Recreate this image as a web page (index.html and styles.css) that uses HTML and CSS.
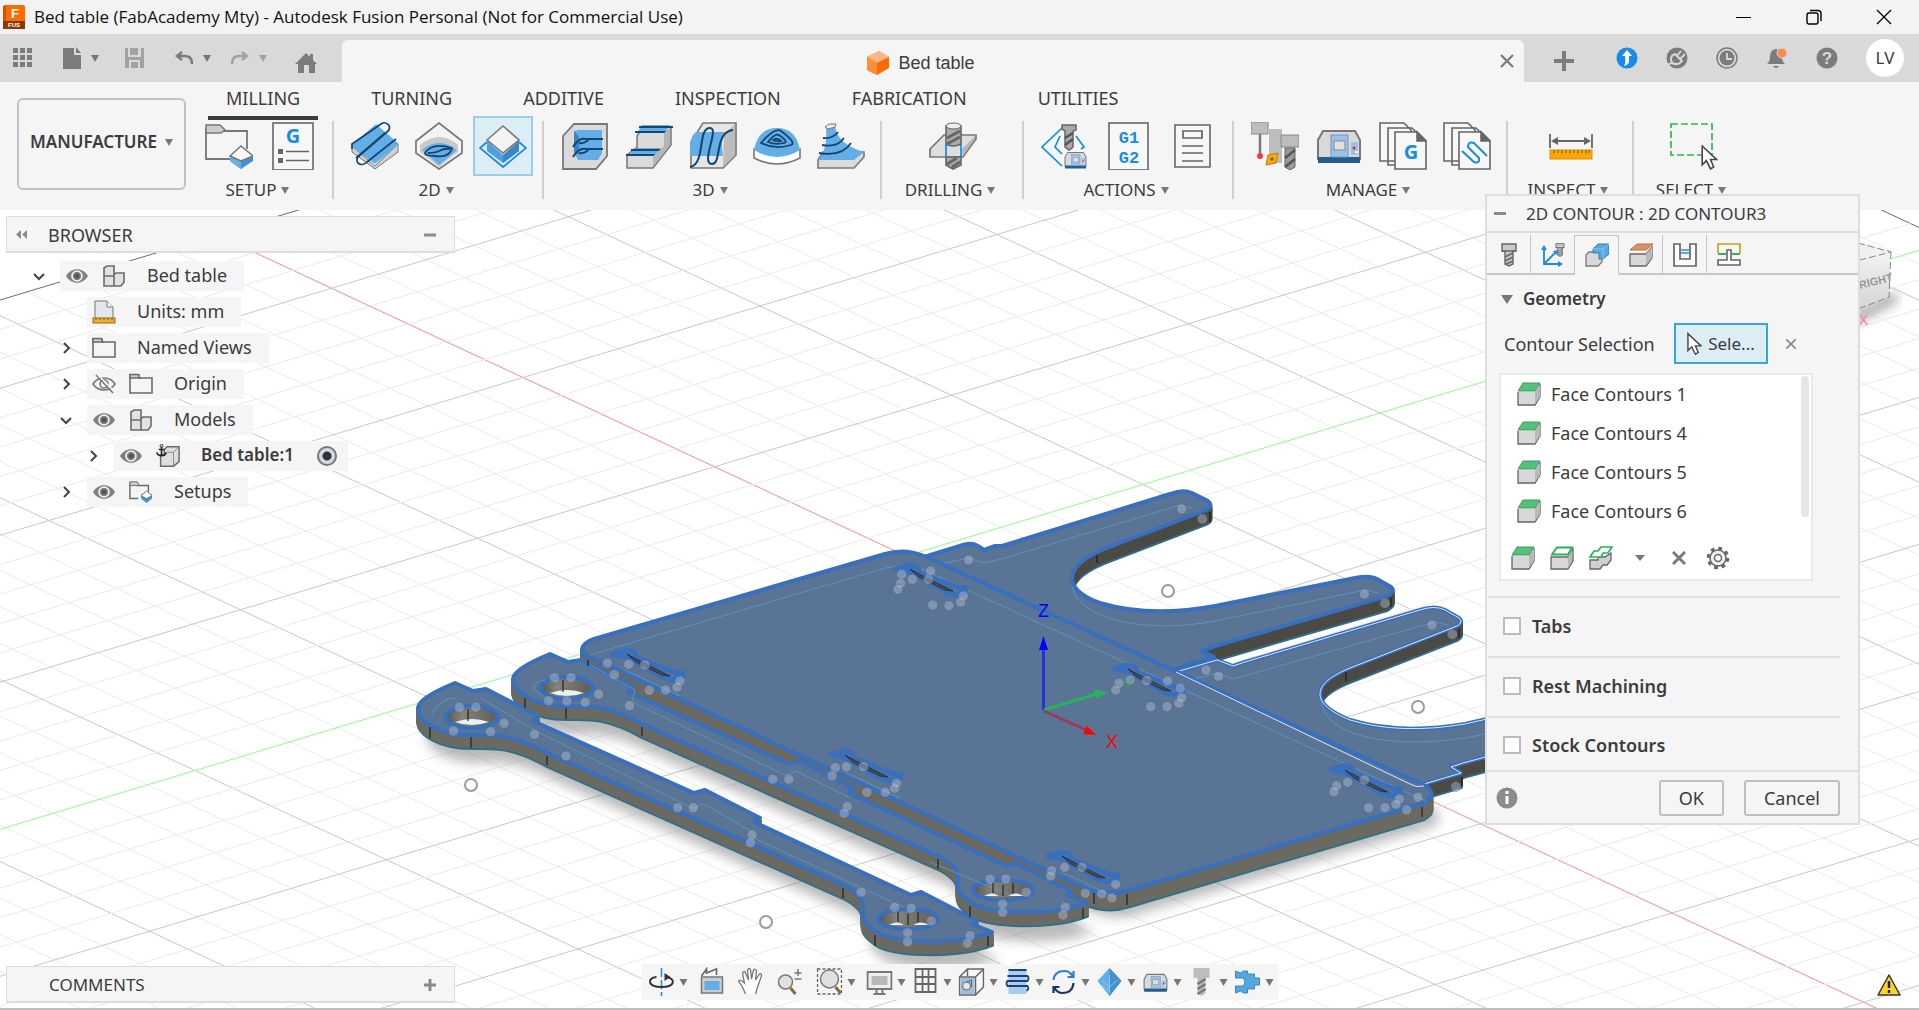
FILE: index.html
```html
<!DOCTYPE html>
<html lang="en">
<head>
<meta charset="utf-8">
<title>Bed table (FabAcademy Mty) - Autodesk Fusion Personal</title>
<link rel="stylesheet" href="styles.css">
</head>
<body>
<svg class="defs" aria-hidden="true">
  <defs>
    <linearGradient id="wall" x1="0" y1="0" x2="1" y2="0"><stop offset="0" stop-color="#55544e"/><stop offset=".3" stop-color="#85847a"/><stop offset="1" stop-color="#5d5c56"/></linearGradient>
    <linearGradient id="cubeg" x1="0" y1="0" x2="0" y2="1"><stop offset="0" stop-color="#f3f3f3"/><stop offset="1" stop-color="#d2d2d2"/></linearGradient>
    <filter id="soft" x="-10%" y="-10%" width="120%" height="130%"><feGaussianBlur stdDeviation="6"/></filter>
    <symbol id="i-eye" viewBox="0 0 24 24"><path d="M1 12C6 3 18 3 23 12C18 21 6 21 1 12z" fill="#808080"/><circle cx="12" cy="12" r="5" fill="#808080" stroke="#f5f5f5" stroke-width="1.6"/><circle cx="12" cy="12" r="2.5" fill="#555"/></symbol>
    <symbol id="i-eyeoff" viewBox="0 0 24 24"><path d="M1 12C6 4 18 4 23 12C18 20 6 20 1 12zM4 3L21 21" fill="none" stroke="#777" stroke-width="1.6"/><circle cx="12" cy="12" r="4" fill="none" stroke="#777" stroke-width="1.6"/><path d="M6 3L23 20" stroke="#f5f5f5" stroke-width="1.5"/></symbol>
    <symbol id="i-folder" viewBox="0 0 24 24"><path d="M1 20V3H10V6H23V21H1z" fill="none" stroke="#6b6b6b" stroke-width="1.6"/><path d="M1 2.500H9L11 6H1z" fill="#ccc" stroke="#6b6b6b" stroke-width="1.400"/></symbol>
    <symbol id="i-parts" viewBox="0 0 24 24"><g fill="#e2e2e2" stroke="#6b6b6b" stroke-width="1.600"><path d="M2 12V4L5 2H12V12zM2 12H12V22H2zM12 11L14 9H22V18L19 22H12z"/></g></symbol>
    <symbol id="i-units" viewBox="0 0 24 24"><path d="M3 19V1H15L21 7V19z" fill="#e4e6ee" stroke="#777"/><path d="M15 1V7H21" fill="#fff" stroke="#777"/><rect x="1" y="18" width="22" height="5" fill="#e9b12f" stroke="#9a6a1c"/><path d="M4 18v2M8 18v2M12 18v2M16 18v2M20 18v2" stroke="#8a5d16"/></symbol>
    <symbol id="i-setups" viewBox="0 0 26 26"><path d="M10 20H1V3H9V6H21V13" fill="none" stroke="#6b6b6b" stroke-width="1.600"/><path d="M1 2H9L11 6H1z" fill="#ccc" stroke="#6b6b6b"/><path d="M13 16L19 12L25 16V20L19 25L13 20z" fill="#3f93d3"/><path d="M13 17L19 12L25 17L19 20z" fill="#fff" stroke="#777"/></symbol>
    <symbol id="i-comp" viewBox="0 0 26 26"><path d="M5 12V24H19L25 19V3H12L9 6V12z" fill="#dedede" stroke="#6b6b6b" stroke-width="1.600"/><path d="M19 24V9L25 3M12 9H19" fill="none" stroke="#888"/><path d="M6 3V13M1 9C2 14 10 14 11 9M3 6H9" fill="none" stroke="#222" stroke-width="1.800"/><circle cx="6" cy="2" r="1.600" fill="none" stroke="#222"/></symbol>
    <symbol id="i-face" viewBox="0 0 24 24"><path d="M1 10H17L23 2V15L18 23H1z" fill="#d8d8d8"/><path d="M1 10V23H18L23 15V2" fill="none" stroke="#666" stroke-width="1.300"/><path d="M18 10L23 3V15L18 22z" fill="#b8b8b8"/><path d="M1 9L6 1H23L18 9z" fill="#55c07b" stroke="#3f9a5e"/></symbol>
    <symbol id="i-faceline" viewBox="0 0 24 24"><path d="M1 11H18L23 3V15L18 23H1z" fill="#d8d8d8" stroke="#666" stroke-width="1.300"/><path d="M18 11V22L22 15V4z" fill="#b8b8b8"/><path d="M2 8.500L7 1.500H22L18 8.500z" fill="#fff" stroke="#22b455" stroke-width="1.800"/></symbol>
    <symbol id="i-mill" viewBox="0 0 48 48"><path d="M3 18L8 9H40L45 18V37H3z" fill="#d9d9d9" stroke="#777" stroke-width="2"/><path d="M3 35H45V41H3z" fill="#235d8c"/><rect x="16" y="13" width="17" height="22" fill="#9cc1e8" stroke="#6c96c2"/><rect x="19" y="19" width="11" height="9" fill="#e0e0e0" stroke="#888"/><path d="M36 20H43V33H36z" fill="#9cc1e8"/><circle cx="39" cy="26" r="1.500" fill="#d23"/><path d="M40 29h3v2h-3z" fill="#fff"/></symbol>
    <symbol id="i-tool" viewBox="0 0 24 24"><path d="M5 1H19V8H16V21L12 23L8 21V8H5z" fill="#c9c9c9" stroke="#666" stroke-width="1.400"/><path d="M8 14L16 10M8 18L16 14M9 21L16 18M5 8H19" stroke="#666" stroke-width="1.600"/></symbol>
    <symbol id="i-cursor" viewBox="0 0 16 24"><path d="M1 1V19L5 15L9 23L12 21L9 14H15z" fill="#fff" stroke="#444" stroke-width="1.500"/></symbol>
  </defs>
</svg>

<header class="titlebar">
  <svg class="app-icon" viewBox="0 0 22 24"><rect width="22" height="24" rx="2" fill="#ff6b00"/><path d="M0 2L3 0V17H0z" fill="#d35400"/><path d="M0 16H22V24H0z" fill="#8c3a05"/><text x="12" y="13" class="appf">F</text><text x="11" y="22" class="appfus">FUS</text></svg>
  <h1>Bed table (FabAcademy Mty) - Autodesk Fusion Personal (Not for Commercial Use)</h1>
  <button class="win" aria-label="Minimize"><svg width="16" height="16"><path d="M0 8.500H15" stroke="#000" fill="none"/></svg></button>
  <button class="win" aria-label="Restore"><svg width="16" height="16" fill="none" stroke="#000" stroke-width="1.400"><rect x="1" y="4" width="11" height="11" rx="2"/><path d="M4 1.500H12Q15 1.500 15 4.500V12"/></svg></button>
  <button class="win" aria-label="Close"><svg width="16" height="16"><path d="M1 1L15 15M15 1L1 15" stroke="#000" stroke-width="1.300"/></svg></button>
</header>

<nav class="tabbar">
  <div class="quick">
    <button class="q q-grid" aria-label="Data panel"><svg width="20" height="20" fill="#7c7c7c"><path d="M0 0h5v5H0zM7 0h5v5H7zM14 0h5v5h-5zM0 7h5v5H0zM7 7h5v5H7zM14 7h5v5h-5zM0 14h5v5H0zM7 14h5v5H7zM14 14h5v5h-5z"/></svg></button>
    <button class="q q-file" aria-label="File"><svg width="18" height="22" fill="#7c7c7c"><path d="M0 1H11V8H18V22H0zM13 0L18 6H13z"/></svg><i class="tri"></i></button>
    <button class="q q-save" aria-label="Save"><svg width="20" height="20" fill="#a2a2a2"><path fill-rule="evenodd" d="M0 0H3V9H16V0H19V20H0zM4 12V20H15V12zM5 0H13V7H5zM6 14H13V20H6z"/></svg></button>
    <button class="q q-undo" aria-label="Undo"><svg width="18" height="14" fill="none" stroke="#7c7c7c" stroke-width="2.500"><path d="M7 1L2 5L7 9M2 5H10Q17 5 17 13"/></svg><i class="tri"></i></button>
    <button class="q q-redo dim" aria-label="Redo"><svg width="18" height="14" fill="none" stroke="#a2a2a2" stroke-width="2.500"><path d="M11 1L16 5L11 9M16 5H8Q1 5 1 13"/></svg><i class="tri"></i></button>
    <button class="q q-home" aria-label="Home"><svg width="22" height="22" fill="#7c7c7c"><path d="M0 12L11 1L15 5V2H18V8L22 12H20V21H14V13H9V21H3V12z"/></svg></button>
  </div>
  <div class="doc-tab">
    <span class="doc-name"><svg width="22" height="24"><path d="M0 6L12 0L22 6V17L10 24L0 19z" fill="#ff6a00"/><path d="M0 6L12 0L22 6L10 12z" fill="#ffb584"/><path d="M0 6L10 12V24L0 19z" fill="#ff8d3c"/></svg>Bed table</span>
    <button class="doc-close" aria-label="Close document"><svg width="14" height="14"><path d="M1 1L13 13M13 1L1 13" stroke="#7a7a7a" stroke-width="2.200"/></svg></button>
  </div>
  <div class="status">
    <button class="s-plus" aria-label="New document"><svg width="20" height="20"><path d="M10 0V20M0 10H20" stroke="#7c7c7c" stroke-width="4"/></svg></button>
    <button aria-label="Updates"><svg width="22" height="22"><circle cx="11" cy="11" r="10.500" fill="#178be6"/><path d="M11 3L16 9H13V15Q12 18 8 19Q10 16 9 9H6z" fill="#fff"/></svg></button>
    <button aria-label="Extensions"><svg width="22" height="22"><circle cx="11" cy="11" r="10.500" fill="#7c7c7c"/><path d="M2 18L7 15M6 16Q3 9 9 7L16 14Q12 19 6 16M11 9L15 4M14 12L19 7" fill="none" stroke="#d9d9d9" stroke-width="2"/></svg></button>
    <button aria-label="Job status"><svg width="22" height="22"><circle cx="11" cy="11" r="10" fill="none" stroke="#7c7c7c" stroke-width="1.500"/><circle cx="11" cy="11" r="7.500" fill="#7c7c7c"/><path d="M11 6V12H16" fill="none" stroke="#d9d9d9" stroke-width="1.800"/></svg></button>
    <button aria-label="Notifications"><svg width="22" height="22"><path d="M1 17Q4 15 4 9Q4 3 10 2Q16 3 16 9Q16 15 19 17zM7 19H13Q10 23 7 19" fill="#7c7c7c"/><circle cx="16" cy="6" r="5" fill="#ff8a50" stroke="#d9d9d9"/></svg></button>
    <button aria-label="Help"><svg width="22" height="22"><circle cx="11" cy="11" r="10.500" fill="#7c7c7c"/><text x="11" y="17" class="qmark">?</text></svg></button>
    <button class="avatar">LV</button>
  </div>
</nav>

<section class="ribbon">
  <button class="workspace">MANUFACTURE<i class="tri"></i></button>
  <div class="ribbon-main">
    <div class="ribbon-tabs">
      <button class="on">MILLING</button><button>TURNING</button><button>ADDITIVE</button><button>INSPECTION</button><button>FABRICATION</button><button>UTILITIES</button>
    </div>
    <div class="groups">
      <div class="group g-setup"><div class="icons">
        <button aria-label="Setup"><svg viewBox="0 0 48 48"><path d="M25 37H1V7H18V9H42V27" fill="none" stroke="#777" stroke-width="1.800"/><path d="M1 3H15L20 8L16 11H1z" fill="#ccc" stroke="#777" stroke-width="1.500"/><path d="M25 34L36 25L48 34V39L36 47L25 39z" fill="#3f93d3"/><path d="M25 34L36 24L48 34L36 39z" fill="#f8f8f8" stroke="#777" stroke-width="1.500"/><path d="M25 35L36 40V47L25 39z" fill="#69b2e8"/></svg></button>
        <button aria-label="NC Program"><svg viewBox="0 0 48 48"><rect x="4" y="1" width="40" height="47" fill="#f7f7f7" stroke="#666" stroke-width="1.600"/><text x="24" y="21" class="g">G</text><path d="M17 29.500H40M17 38.500H40" stroke="#666" stroke-width="1.600"/><path d="M9 27h5v5H9zM9 36h5v5H9z" fill="#666"/></svg></button>
      </div><button class="glabel">SETUP<i class="tri"></i></button></div>
      <div class="group g-2d"><div class="icons">
        <button aria-label="2D Adaptive"><svg viewBox="0 0 48 48"><path d="M1 24L24 44L47 22V30L24 47L1 30z" fill="#d0d0d0" stroke="#777"/><path d="M0 24L25 2L48 22L24 42z" fill="#63aee6"/><path d="M1 27V22L30 2C36-2 42 6 36 10L8 34C2 40 10 46 16 40L45 17M5 36L34 11" fill="none" stroke="#12456f" stroke-width="1.700"/></svg></button>
        <button aria-label="2D Pocket"><svg viewBox="0 0 48 48"><path d="M1 19L24 1L47 19V31L24 47L1 31z" fill="#f4f4f4" stroke="#777" stroke-width="1.700"/><path d="M5 23Q24 7 43 23V30L24 45L5 30z" fill="#c9c9c9"/><path d="M7 28Q24 14 42 28L24 43z" fill="#63aee6"/><path d="M10 31Q17 20 37 26Q35 36 20 34Q10 34 10 31zM13 31Q20 31 24 29Q30 26 35 27" fill="none" stroke="#12456f" stroke-width="1.800"/></svg></button>
        <button class="active" aria-label="2D Contour"><svg viewBox="0 0 48 48"><path d="M8 20L1 26L24 45L47 26L40 20" fill="none" stroke="#178be6" stroke-width="1.800"/><path d="M8 19V29L24 41L40 29V19L24 33z" fill="#4f9fdd"/><path d="M24 33L40 19V29L24 41z" fill="#3a86c4"/><path d="M8 18L24 4L40 18L24 31z" fill="#f4f4f4" stroke="#777" stroke-width="1.600"/></svg></button>
      </div><button class="glabel">2D<i class="tri"></i></button></div>
      <div class="group g-3d"><div class="icons">
        <button aria-label="3D Adaptive"><svg viewBox="0 0 48 48"><path d="M2 14L13 2H46V34L35 47H2z" fill="#dadada" stroke="#777" stroke-width="1.800"/><path d="M13 9L18 8H41V31L37 38H17L13 30z" fill="#63aee6"/><path d="M13 9L18 15V32L13 30z" fill="#3a86c4"/><path d="M12 25Q18 15 25 17H42M18 21Q24 22 28 17M12 35Q18 25 25 27H42M18 31Q24 32 28 27" fill="none" stroke="#12456f" stroke-width="2"/></svg></button>
        <button aria-label="3D Pocket"><svg viewBox="0 0 48 48"><path d="M2 33L12 25V14L18 5H46V23L28 46H2z" fill="#dadada" stroke="#777" stroke-width="1.500"/><path d="M17 3H45L40 11H12zM10 26H36L29 34H4z" fill="#63aee6"/><path d="M14 5H48M10 10H44M6 28H37M1 33H32" stroke="#12456f" stroke-width="1.800"/><path d="M39 11V24L28 34V45L45 23V6z" fill="#b5b5b5"/></svg></button>
        <button aria-label="Parallel"><svg viewBox="0 0 48 48"><path d="M2 20L14 1H47V33L34 46H2z" fill="#e6e6e6" stroke="#777" stroke-width="1.600"/><path d="M35 12L46 2V33L34 45z" fill="#bdbdbd"/><path d="M1 34Q0 12 8 10H36Q31 18 34 34z" fill="#63aee6"/><path d="M1 45C17 42 8 6 21 6C31 6 11 42 23 42C33 42 25 10 44 8" fill="none" stroke="#12456f" stroke-width="2"/></svg></button>
        <button aria-label="Contour"><svg viewBox="0 0 48 48"><path d="M1 27V36Q24 48 47 36V27z" fill="#fff" stroke="#777" stroke-width="1.600"/><path d="M1 28Q5 6 24 6T47 28Q24 42 1 28z" fill="#63aee6"/><path d="M8 21Q22 5 28 9Q44 21 38 23Q23 28 8 21zM15 20Q22 11 26 13Q36 20 31 21Q23 23 15 20zM20 18Q24 15 28 19Q24 20 20 18z" fill="none" stroke="#12456f" stroke-width="1.800"/></svg></button>
        <button aria-label="Ramp"><svg viewBox="0 0 48 48"><path d="M1 38L6 30H47V35L37 46H1z" fill="#dadada" stroke="#777" stroke-width="1.600"/><path d="M9 6L18 4Q20 22 47 30L37 38H1Q11 27 9 6z" fill="#63aee6"/><path d="M8 5L12 2H19L18 5L11 7z" fill="#eee" stroke="#777"/><path d="M6 16Q16 17 21 10M5 23Q20 26 27 16M2 31Q25 35 34 21" fill="none" stroke="#12456f" stroke-width="1.800"/></svg></button>
      </div><button class="glabel">3D<i class="tri"></i></button></div>
      <div class="group g-drill"><div class="icons">
        <button aria-label="Drill"><svg viewBox="0 0 48 48"><path d="M1 27L15 13H47V17L34 35H1z" fill="#dedede" stroke="#777" stroke-width="1.700"/><path d="M33 27L46 14V17L34 34z" fill="#b5b5b5"/><path d="M17 4V22Q24 26 32 22V4zM17 35V43L24 47L32 43V35z" fill="#ababab" stroke="#666" stroke-width="1.600"/><ellipse cx="24.500" cy="4" rx="7.500" ry="3" fill="#eee" stroke="#666"/><path d="M18 16L31 9M18 22L31 15M18 42L28 36M23 45L31 40" stroke="#666" stroke-width="3"/><path d="M17 22V35M32 22V35" stroke="#178be6" stroke-width="1.700"/></svg></button>
      </div><button class="glabel">DRILLING<i class="tri"></i></button></div>
      <div class="group g-actions"><div class="icons">
        <button aria-label="Simulate"><svg viewBox="0 0 48 48"><path d="M21 6L1 25L21 44M19 14L14 25L21 32M35 14L43 25L40 27" fill="none" stroke="#178be6" stroke-width="1.700"/><path d="M21 3H35V8L32 9V25L28 28L24 25V9L21 7z" fill="#aaa" stroke="#666" stroke-width="1.500"/><path d="M24 16L32 11M24 23L32 17" stroke="#555" stroke-width="2.500"/><use href="#i-mill" x="22" y="26" width="25" height="24"/></svg></button>
        <button aria-label="Post Process"><svg viewBox="0 0 48 48"><rect x="4" y="1" width="39" height="47" fill="#f7f7f7" stroke="#666" stroke-width="1.600"/><text x="24" y="21" class="g1">G1</text><text x="24" y="41" class="g1">G2</text></svg></button>
        <button aria-label="Setup Sheet"><svg viewBox="0 0 48 48"><path d="M6 3H41V45H6z" fill="#f7f7f7" stroke="#666" stroke-width="1.600"/><path d="M14 9H33V16H14zM13 24H34M13 31H34M13 39H34" fill="none" stroke="#666" stroke-width="1.700"/></svg></button>
      </div><button class="glabel">ACTIONS<i class="tri"></i></button></div>
      <div class="group g-manage"><div class="icons">
        <button aria-label="Tool Library"><svg viewBox="0 0 48 48"><path d="M0 0H17V12H0zM18 7H31V41H18zM30 13H48V25H30z" fill="#bdbdbd"/><path d="M0 0H17V12H0zM30 13H48V25H30z" fill="none" stroke="#888"/><path d="M9 12V31" stroke="#777" stroke-width="2.500"/><circle cx="9" cy="34" r="3" fill="#ff3434"/><path d="M17 33L27 31L25 41L15 43z" fill="#ffa800" stroke="#c27c00"/><circle cx="21" cy="37" r="1.800" fill="#666"/><path d="M34 26H44V45L39 48L34 45z" fill="#999" stroke="#666"/><path d="M34 36L44 28M34 45L44 37" stroke="#555" stroke-width="2.500"/></svg></button>
        <button aria-label="Machine Library"><svg viewBox="0 0 48 48"><use href="#i-mill" width="48" height="48"/></svg></button>
        <button aria-label="Post Library"><svg viewBox="0 0 48 48" fill="#f7f7f7" stroke="#666" stroke-width="1.600"><path d="M1 1H25L32 8V39H1zM9 6H33L40 13V43H9z"/><path d="M16 10H38L47 19V47H16z"/><path d="M38 10V19H47z" fill="#666"/><text x="32" y="37" class="g">G</text></svg></button>
        <button aria-label="Template Library"><svg viewBox="0 0 48 48" fill="#f7f7f7" stroke="#666" stroke-width="1.600"><path d="M1 1H25L32 8V39H1zM9 6H33L40 13V43H9z"/><path d="M16 10H38L47 19V47H16z"/><path d="M38 10V19H47z" fill="#666"/><path d="M19 29L31 40Q37 42 36 36L25 25Q25 19 31 21L44 34" fill="none" stroke="#178be6" stroke-width="2"/></svg></button>
      </div><button class="glabel">MANAGE<i class="tri"></i></button></div>
      <div class="group g-inspect"><div class="icons">
        <button aria-label="Measure"><svg viewBox="0 0 48 48"><path d="M3 12V26M45 12V26M6 19H42" stroke="#666" stroke-width="1.800"/><path d="M4 19L11 15V23zM44 19L37 15V23z" fill="#666"/><rect x="3" y="28" width="42" height="9" fill="#ffa800" stroke="#d99012"/><path d="M7 28v4M11 28v3M15 28v4M19 28v3M23 28v4M27 28v3M31 28v4M35 28v3M39 28v4M42 28v3" stroke="#7a5a14"/></svg></button>
      </div><button class="glabel">INSPECT<i class="tri"></i></button></div>
      <div class="group g-select"><div class="icons">
        <button aria-label="Select"><svg viewBox="0 0 48 48"><rect x="1" y="2" width="41" height="31" fill="none" stroke="#2fb457" stroke-width="1.700" stroke-dasharray="7 3"/><use href="#i-cursor" x="31" y="23" width="17" height="25"/></svg></button>
      </div><button class="glabel">SELECT<i class="tri"></i></button></div>
    </div>
  </div>
</section>

<main class="viewport">
  <svg class="scene" viewBox="0 210 1919 798" preserveAspectRatio="xMidYMid slice" aria-label="Model">
    <defs>
      <path id="board" d="M582 650Q582 643 594 639L885 554Q905 548 924 556L1426 786Q1438 795 1424 803L1130 890Q1105 898 1082 887L585 655Q582 653 582 650z"/>
      <path id="forkA" d="M924 557L963 545Q973 542 978 546L984 550L995 546L1002 546L1170 494Q1183 489 1192 493L1208 501Q1214 506 1206 510L1112 546C1060 565 1062 590 1100 603Q1150 618 1215 606L1355 578Q1370 575 1377 579L1391 587Q1396 591 1387 596L1215 646L1201 651L1214 657L1172 670z"/>
      <path id="forkB" d="M1176 672L1217 660L1233 666L1245 662L1420 610Q1435 605 1445 610L1459 618Q1464 622 1457 626L1350 668C1310 684 1310 704 1350 720Q1400 735 1465 724L1500 716V753L1463 763L1451 767L1461 773L1424 784Q1418 787 1410 784z"/>
      <path id="plank" d="M418 708Q418 698 455 683L473 691L486 689L538 716L533 721L694 793L705 790L760 818L754 822L911 895L921 892L977 921L972 924L992 932C960 945 900 943 880 934C850 916 870 910 859 896Q852 889 843 885L547 753C510 732 490 735 471 735C440 735 418 722 418 708z"/>
      <path id="slot" d="M613 654L627 650L634 652L637 658L676 673L683 673L682 677L673 680L663 677L628 657z"/>
    </defs>
    <g class="grid"></g>
    <g class="shadow" filter="url(#soft)"><use href="#board" x="8" y="24"/><use href="#plank" x="103" y="0"/><use href="#plank" x="8" y="28"/></g>
    <g class="solid dark"><use class="foot" href="#forkA" y="14"/><use href="#forkA" y="12"/><use href="#forkA" y="10"/><use href="#forkA" y="8"/><use href="#forkA" y="6"/><use href="#forkA" y="4"/><use href="#forkA" y="2"/></g>
    <use class="top" href="#forkA"/>
    <g class="solid dark"><use class="foot" href="#forkB" y="14"/><use href="#forkB" y="12"/><use href="#forkB" y="10"/><use href="#forkB" y="8"/><use href="#forkB" y="6"/><use href="#forkB" y="4"/><use href="#forkB" y="2"/></g>
    <use class="top" href="#forkB"/><use class="hot" href="#forkB"/>
    <g class="ghost"><path d="M940 564L968 558L984 563L1002 559L1180 505L1192 508M1072 586C1080 625 1160 632 1215 621L1365 590L1378 593M1190 680L1217 673L1233 679L1435 622L1448 625M1321 700C1325 740 1400 748 1465 738L1500 731"/></g>
    <g class="solid"><use class="foot" href="#board" y="16"/><use href="#board" y="14"/><use href="#board" y="12"/><use href="#board" y="10"/><use href="#board" y="8"/><use href="#board" y="6"/><use href="#board" y="4"/><use href="#board" y="2"/></g>
    <use class="top" href="#board"/><path class="hot" d="M1176 672L1410 784Q1416 788 1424 786"/>
    <g class="ghost"><path d="M590 655L885 568Q905 564 924 570L1426 801M625 670L680 696M845 772L900 798M1062 872L1116 898"/></g>
    <g class="slots"><use href="#slot"/><use href="#slot" x="218" y="101"/><use href="#slot" x="435" y="202"/><use href="#slot" x="283" y="-85"/><use href="#slot" x="501" y="15"/><use href="#slot" x="718" y="116"/></g>
    <g class="cuts"><path id="cut" d="M627 654L640 661L670 676L662 675L636 662z"/><use href="#cut" x="218" y="101"/><use href="#cut" x="435" y="202"/><use href="#cut" x="283" y="-85"/><use href="#cut" x="501" y="15"/><use href="#cut" x="718" y="116"/></g>
    <g>
      <g class="solid"><use class="foot" href="#plank" x="95" y="-16"/><use href="#plank" x="95" y="-18"/><use href="#plank" x="95" y="-20"/><use href="#plank" x="95" y="-22"/><use href="#plank" x="95" y="-24"/><use href="#plank" x="95" y="-26"/></g>
      <use class="top" href="#plank" x="95" y="-29"/>
      <g class="holes" transform="translate(95 -29)"><ellipse cx="472" cy="717" rx="26" ry="11"/><ellipse cx="908" cy="919" rx="30" ry="10"/><path d="M455 722Q472 716 489 722Q472 728 455 722zM889 925Q897 920 904 925zM913 925Q921 920 929 925z"/></g>
      <path class="ghost" d="M545 680Q520 685 550 700M590 665L635 690L632 702L785 775L796 771L850 798M930 862L1010 895"/>
    </g>
    <g>
      <g class="solid"><use class="foot" href="#plank" y="13"/><use href="#plank" y="11"/><use href="#plank" y="9"/><use href="#plank" y="7"/><use href="#plank" y="5"/><use href="#plank" y="3"/></g>
      <use class="top" href="#plank"/>
      <g class="holes"><ellipse cx="472" cy="717" rx="26" ry="11"/><ellipse cx="908" cy="919" rx="30" ry="10"/><path d="M455 722Q472 716 489 722Q472 728 455 722zM889 925Q897 920 904 925zM913 925Q921 920 929 925z"/></g>
      <path class="ghost" d="M432 714Q440 698 456 698M480 698L540 733L692 808L704 804L752 832L754 838L905 908"/>
    </g>
    <path class="ticks" d="M430 727V738M471 737V748M547 756V765M843 888V898M875 935V946M988 936V946M525 698V708M566 708V719M642 727V736M938 859V869M970 906V917M1083 908V918M1094 893V904M1127 894V905M1422 807V817M1097 555V563M1210 512V522M1391 598V607M1346 672V681M1459 629V638M1462 777V786M588 660V666M468 709V721M898 912V922M908 914V925M918 912V922M563 680V692M993 883V893M1003 885V896M1013 883V893"/>
    <g class="balls"></g>
    <g class="rings"><circle cx="471" cy="785" r="6"/><circle cx="766" cy="922" r="6"/><circle cx="1168" cy="591" r="6"/><circle cx="1418" cy="707" r="6"/></g>
    <g class="axes">
      <path d="M1043.500 710V648" stroke="#2233dd"/><path d="M1039 650L1043.500 636L1048 650z" fill="#00f"/>
      <path d="M1044 710L1096 694" stroke="#27b35a"/><path d="M1094 690L1108 692L1096 699z" fill="#27b35a"/>
      <path d="M1044 711L1086 730" stroke="#9b3a5e"/><path d="M1083 734L1087 726L1096 735z" fill="#f00"/>
      <text x="1038" y="617" fill="#00f">Z</text><text x="1106" y="748" fill="#f00">X</text><text x="1122" y="691" fill="#27b35a" opacity=".55">Y</text>
    </g>
    <g class="viewcube">
      <path class="cube-shade" d="M1850 316L1895 292L1898 301L1850 326z" filter="url(#soft)"/>
      <path d="M1820 256L1891 252L1889 297L1858 309L1820 315z" fill="url(#cubeg)"/><path d="M1820 236L1858 242L1891 251L1858 260L1820 264z" fill="#f0f0f0"/>
      <path d="M1858 243L1891 252L1860 260M1891 252L1889 297L1858 309" fill="none" stroke="#888" stroke-dasharray="7 3"/>
      <text x="1860" y="289" class="cube-text" transform="rotate(-14 1860 289)">RIGHT</text><text x="1859" y="325" class="cube-x">X</text>
    </g>
  </svg>

  <aside class="browser">
    <header class="panel-head"><svg width="12" height="10" fill="#8a8a8a"><path d="M5 0V9L0 4.500zM11 0V9L6 4.500z"/></svg><h2>BROWSER</h2><button aria-label="Collapse"><svg width="12" height="12"><path d="M0 6H12" stroke="#8a8a8a" stroke-width="3"/></svg></button></header>
    <ul class="tree">
      <li class="l1"><svg class="chev"><path d="M1 4L6 9L11 4"/></svg><div class="node"><svg class="ic"><use href="#i-eye"/></svg><svg class="ic"><use href="#i-parts"/></svg><span>Bed table</span></div></li>
      <li class="l2"><svg class="chev"></svg><div class="node"><svg class="ic"><use href="#i-units"/></svg><span>Units: mm</span></div></li>
      <li class="l2"><svg class="chev"><path d="M4 1L9 6L4 11"/></svg><div class="node"><svg class="ic"><use href="#i-folder"/></svg><span>Named Views</span></div></li>
      <li class="l2"><svg class="chev"><path d="M4 1L9 6L4 11"/></svg><div class="node"><svg class="ic"><use href="#i-eyeoff"/></svg><svg class="ic"><use href="#i-folder"/></svg><span>Origin</span></div></li>
      <li class="l2"><svg class="chev"><path d="M1 4L6 9L11 4"/></svg><div class="node"><svg class="ic"><use href="#i-eye"/></svg><svg class="ic"><use href="#i-parts"/></svg><span>Models</span></div></li>
      <li class="l3"><svg class="chev"><path d="M4 1L9 6L4 11"/></svg><div class="node"><svg class="ic"><use href="#i-eye"/></svg><svg class="ic"><use href="#i-comp"/></svg><label for="act">Bed table:1</label><input type="radio" id="act" checked></div></li>
      <li class="l2"><svg class="chev"><path d="M4 1L9 6L4 11"/></svg><div class="node"><svg class="ic"><use href="#i-eye"/></svg><svg class="ic"><use href="#i-setups"/></svg><span>Setups</span></div></li>
    </ul>
  </aside>

  <section class="comments panel-head"><h2>COMMENTS</h2><button aria-label="Expand"><svg width="12" height="12"><path d="M0 6H12M6 0V12" stroke="#8a8a8a" stroke-width="3"/></svg></button></section>

  <div class="navbar">
    <button class="w48" aria-label="Orbit"><svg viewBox="0 0 26 30"><path d="M13 1V29" stroke="#178be6" stroke-width="1.500" stroke-dasharray="9 3"/><path d="M17 10C28 11 27 20 13 20S-2 11 8 10" fill="none" stroke="#333" stroke-width="2"/><path d="M16 6L22 10L16 14z" fill="#333"/></svg><i class="tri"></i></button>
    <button class="w39" aria-label="Look at"><svg viewBox="0 0 26 30"><path d="M3 10H24V26H3z" fill="#ccc" stroke="#777" stroke-width="1.500"/><rect x="6" y="14" width="15" height="9" fill="#63aee6"/><path d="M3 9L8 2V6L18 2V8" fill="none" stroke="#666" stroke-width="1.600"/></svg></button>
    <button class="w39" aria-label="Pan"><svg viewBox="0 0 26 30"><path d="M8 27L5 20L1 14Q3 12 7 16L5 6Q7 3 8 6L11 13L10 3Q12 0 13 3L14 12L16 3Q18 1 19 4L18 13L22 7Q24 6 24 9L20 20L18 27" fill="#fff" stroke="#777" stroke-width="1.300"/></svg></button>
    <button class="w39" aria-label="Zoom"><svg viewBox="0 0 26 30"><circle cx="9" cy="15" r="7" fill="#e0e0e0" stroke="#777" stroke-width="1.500"/><path d="M14 21L19 27" stroke="#8a6a3a" stroke-width="3"/><path d="M18 6H25M21.500 2V9M18 12H25" stroke="#777" stroke-width="1.500"/></svg></button>
    <button class="w54" aria-label="Zoom window"><svg viewBox="0 0 26 30"><path d="M1 2H25V27H1z" fill="none" stroke="#666" stroke-width="1.400" stroke-dasharray="3 2"/><circle cx="13" cy="12" r="9" fill="#e0e0e0" stroke="#777" stroke-width="1.400"/><path d="M19 20L24 26" stroke="#8a6a3a" stroke-width="3"/></svg><i class="tri"></i></button>
    <button class="w46" aria-label="Display"><svg viewBox="0 0 26 30"><path d="M1 5H25V22H1z" fill="#eee" stroke="#777" stroke-width="2"/><path d="M5 9H21V18H5z" fill="#b8b8b8"/><path d="M10 22V26M16 22V26M7 27H19" stroke="#777" stroke-width="2"/></svg><i class="tri"></i></button>
    <button class="w46" aria-label="Grid"><svg viewBox="0 0 26 30"><path d="M3 2H23V25H3zM10 2V25M16 2V25M3 10H23M3 17H23" fill="none" stroke="#666" stroke-width="1.800"/></svg><i class="tri"></i></button>
    <button class="w46" aria-label="Viewports"><svg viewBox="0 0 26 30"><path d="M1 10L9 2H25V20L17 28H1zM17 10L25 2M1 10H17V28M9 2V9" fill="#f7f7f7" stroke="#666" stroke-width="1.500"/><path d="M2 11H16V27H2z" fill="#9dbde0"/><circle cx="8" cy="19" r="4" fill="#e6e6e6" stroke="#666"/><path d="M8 15L13 13V20" fill="none" stroke="#666"/></svg><i class="tri"></i></button>
    <button class="w46" aria-label="Toolpath"><svg viewBox="0 0 26 30"><path d="M4 2H22V27H4z" fill="#a6cdf0"/><path d="M4 3H22M3 9H23Q25 11 23 14H3Q1 16 3 19H23Q25 22 22 24" fill="none" stroke="#1d3f73" stroke-width="1.800"/></svg><i class="tri"></i></button>
    <button class="w46" aria-label="Regenerate"><svg viewBox="0 0 26 30"><path d="M3 13Q4 4 14 4Q19 4 22 9M23 4V10H17" fill="none" stroke="#2b7de0" stroke-width="2.200"/><path d="M23 16Q22 26 12 26Q7 26 4 21M3 26V20H9" fill="none" stroke="#1f3460" stroke-width="2.200"/></svg><i class="tri"></i></button>
    <button class="w46" aria-label="Stock"><svg viewBox="0 0 26 30"><path d="M13 1L25 14L13 29L1 14z" fill="#63aee6"/><path d="M13 1L25 14L13 29z" fill="#4790cc"/><path d="M5 13L13 20L21 13M5 18L13 24M13 8V26" fill="none" stroke="#8cc6f2"/></svg><i class="tri"></i></button>
    <button class="w46" aria-label="Machine"><svg viewBox="0 0 26 30"><use href="#i-mill" y="2" width="26" height="27"/></svg><i class="tri"></i></button>
    <button class="w46" aria-label="Tool"><svg viewBox="0 0 26 30"><path d="M5 1H21V11H17V26L13 29L9 26V11H5z" fill="#bdbdbd"/><path d="M9 17L17 12M9 22L17 17M9 27L17 22" stroke="#777" stroke-width="2.500"/></svg><i class="tri"></i></button>
    <button class="w46" aria-label="Fixture"><svg viewBox="0 0 26 30"><path d="M1 4L6 6L9 4L13 4V7H20V11H25V18H20V22H13V26H9L6 24L1 26V19H9Q12 15 9 11H1z" fill="#56a6e0" stroke="#3d86be"/></svg><i class="tri"></i></button>
  </div>

  <svg class="warn" width="24" height="22"><path d="M12 1L23 21H1z" fill="#ffd42a" stroke="#333" stroke-width="1.500" stroke-linejoin="round"/><path d="M12 7V14M12 16V19" stroke="#222" stroke-width="2.500"/></svg>
</main>

<form class="dialog">
  <header class="dlg-head"><i class="dash"></i><h2>2D CONTOUR : 2D CONTOUR3</h2></header>
  <div class="dlg-tabs">
    <button type="button" aria-label="Tool"><svg viewBox="0 0 24 24"><use href="#i-tool"/></svg></button>
    <button type="button" aria-label="Orientation"><svg viewBox="0 0 24 24"><path d="M3 4V21H20M3 21L15 9" fill="none" stroke="#178be6" stroke-width="1.800"/><path d="M3 2L6 7H0zM22 21L17 18V24zM17 7L16 12L12 8z" fill="#178be6"/><use href="#i-tool" x="12" width="14" height="14"/></svg></button>
    <button type="button" class="sel" aria-label="Geometry"><svg viewBox="0 0 24 24"><path d="M1 12L4 9H17V19L13 23H1z" fill="#d8d8d8" stroke="#777" stroke-width="1.300"/><path d="M8 6L13 1H24V11L18 16H14V10H8z" fill="#56a6e0" stroke="#357fb8"/><path d="M8 6H18V16M18 6L24 1" fill="none" stroke="#8cc6f2"/></svg></button>
    <button type="button" aria-label="Heights"><svg viewBox="0 0 24 24"><path d="M1 11H17L23 4V15L17 23H1z" fill="#d8d8d8" stroke="#666" stroke-width="1.300"/><path d="M17 11V22L23 15V4z" fill="#b8b8b8"/><path d="M1 7L8 1H24L17 7z" fill="#dc9266" stroke="#b97144"/></svg></button>
    <button type="button" aria-label="Passes"><svg viewBox="0 0 24 24"><path d="M1 1H7V16H17V1H23V23H1z" fill="#fff" stroke="#666" stroke-width="1.700"/><path d="M7 7H17M7 10H17" stroke="#3a8bd0" stroke-width="1.500"/></svg></button>
    <button type="button" class="last" aria-label="Linking"><svg viewBox="0 0 24 24"><path d="M1 10V1H23V10" fill="none" stroke="#c5a11d" stroke-width="1.700"/><path d="M1 11H9M15 11H23" stroke="#2fb457" stroke-width="1.800"/><path d="M10 7H14V17H23V22H1V17H10z" fill="#fff" stroke="#666" stroke-width="1.600"/></svg></button>
  </div>
  <div class="dlg-body">
    <h3><i class="tri big"></i>Geometry</h3>
    <div class="pick"><span>Contour Selection</span><button type="button" class="pick-btn"><svg width="15" height="24"><use href="#i-cursor"/></svg>Sele...</button><button type="button" class="clear" aria-label="Clear"><svg width="10" height="10"><path d="M0 0L10 10M10 0L0 10" stroke="#888" stroke-width="1.600"/></svg></button></div>
    <div class="listbox">
      <ul>
        <li><svg><use href="#i-face"/></svg>Face Contours 1</li>
        <li><svg><use href="#i-face"/></svg>Face Contours 4</li>
        <li><svg><use href="#i-face"/></svg>Face Contours 5</li>
        <li><svg><use href="#i-face"/></svg>Face Contours 6</li>
      </ul>
      <i class="scroll"></i>
      <div class="list-tools">
        <button type="button" aria-label="Face"><svg><use href="#i-face"/></svg></button>
        <button type="button" aria-label="Pocket"><svg><use href="#i-faceline"/></svg></button>
        <button type="button" aria-label="Silhouette"><svg viewBox="0 0 24 24"><path d="M1 14H9V11H16L22 7V14L18 19H14L11 23H1z" fill="#d0d0d0" stroke="#666" stroke-width="1.300"/><path d="M1 11L5 5H9L12 1H23L19 7H14L12 11z" fill="#fff" stroke="#22b455" stroke-width="1.700"/></svg></button>
        <button type="button" aria-label="More"><i class="tri wide"></i></button>
        <button type="button" aria-label="Delete"><svg class="del" viewBox="0 0 14 14"><path d="M1 1L13 13M13 1L1 13" stroke="#7a7a7a" stroke-width="3"/></svg></button>
        <button type="button" aria-label="Settings"><svg viewBox="0 0 24 24"><circle cx="12" cy="12" r="9.500" fill="none" stroke="#666" stroke-width="3.600" stroke-dasharray="3.700 3.760"/><circle cx="12" cy="12" r="8" fill="#f0f0f0" stroke="#666" stroke-width="1.500"/><circle cx="12" cy="12" r="3.500" fill="#fff" stroke="#666" stroke-width="1.500"/></svg></button>
      </div>
    </div>
    <label class="opt" for="o1"><input type="checkbox" id="o1">Tabs</label>
    <label class="opt" for="o2"><input type="checkbox" id="o2">Rest Machining</label>
    <label class="opt" for="o3"><input type="checkbox" id="o3">Stock Contours</label>
  </div>
  <footer><svg width="22" height="22"><circle cx="11" cy="11" r="10.500" fill="#8c8c8c"/><path d="M11 9V17M11 4V7" stroke="#fff" stroke-width="3"/></svg><button type="button">OK</button><button type="button">Cancel</button></footer>
</form>
<script src="scene.js"></script>
</body>
</html>
```
FILE: styles.css
```css
* { box-sizing: border-box; }
body { margin: 0; height: 100vh; display: flex; flex-direction: column; overflow: hidden; position: relative; background: #fff; color: #3c3c3c; font: 17px/24px "Noto Sans", sans-serif; }
button { border: 0; padding: 0; background: none; color: inherit; font: inherit; display: inline-flex; align-items: center; justify-content: center; }
h1, h2, h3, ul { margin: 0; padding: 0; font: inherit; list-style: none; }
svg { display: block; flex: none; }
.defs { position: absolute; width: 0; height: 0; }
.tri { width: 0; height: 0; flex: none; border: 4px solid transparent; border-top: 7px solid #777; border-bottom: 0; }
.dim .tri { border-top-color: #a2a2a2; }

.titlebar { height: 34px; flex: none; display: flex; align-items: center; background: #f3f3f3; color: #111; padding-left: 3px; }
.titlebar h1 { flex: 1; margin-left: 9px; font: 17px/24px "Open Sans", sans-serif; }
.app-icon { width: 22px; height: 24px; }
.appf { font: bold 13px "Liberation Sans", sans-serif; fill: #fff; text-anchor: middle; }
.appfus { font: bold 6px "Liberation Sans", sans-serif; fill: #fff; text-anchor: middle; }
.win { width: 70px; height: 34px; }

.tabbar { height: 48px; flex: none; display: flex; background: #d9d9d9; }
.quick { width: 342px; flex: none; display: flex; align-items: center; padding: 0 25px 0 13px; }
.q { gap: 10px; height: 40px; }
.q-file { margin-left: 30px; }
.q-save { margin-left: 26px; }
.q-undo, .q-redo { gap: 10px; }
.q-undo { margin-left: 30px; }
.q-redo { margin-left: 20px; }
.q-home { padding-top: 10px; margin-left: auto; }
.doc-tab { flex: 1; margin-top: 6px; background: #f5f5f5; border-radius: 6px 6px 0 0; display: flex; align-items: center; padding-right: 10px; }
.doc-name { flex: 1; display: flex; align-items: center; justify-content: center; gap: 9px; padding-top: 4px; font: 18px/24px "Liberation Sans", sans-serif; }
.status { width: 395px; flex: none; display: flex; align-items: center; padding: 0 15px 0 30px; justify-content: space-between; }
.status .s-plus { padding-top: 6px; margin-right: 14px; }
.avatar { width: 38px; height: 38px; border-radius: 50%; background: #fff; }
.qmark { font: bold 17px "Liberation Sans", sans-serif; fill: #d9d9d9; text-anchor: middle; }

.ribbon { height: 128px; flex: none; display: flex; background: #f5f5f5; }
.workspace { width: 169px; height: 92px; flex: none; margin: 16px 0 0 17px; padding-bottom: 4px; border: 2px solid #c2c2c2; border-radius: 6px; font-weight: 600; gap: 8px; }
.ribbon-main { flex: 1; min-width: 0; }
.ribbon-tabs { display: flex; padding-left: 22px; height: 38px; font-size: 18px; }
.ribbon-tabs button { padding: 0 18px; margin-right: 35px; height: 38px; padding-bottom: 2px; border-bottom: 4px solid transparent; }
.ribbon-tabs .on { border-color: #3c3c3c; }
.groups { display: flex; height: 84px; padding: 1px 0 0 1px; }
.group { flex: none; display: flex; flex-direction: column; align-items: center; }
.group + .group { border-left: 2px solid #d0d0d0; height: 78px; }
.icons { display: flex; flex: none; height: 56px; padding-left: 2px; }
.icons button { width: 64px; height: 50px; }
.icons svg { width: 48px; height: 48px; }
.icons .active { width: 60px; height: 60px; margin: -5px 2px 0; background: #dcedf5; border: 2px solid #97cfe8; }
.glabel { gap: 5px; flex: none; height: 24px; margin: 1px 4px 0 0; }
.g-setup { width: 145px; } .g-2d, .g-actions { width: 210px; } .g-3d { width: 338px; } .g-drill { width: 142px; } .g-manage { width: 274px; } .g-inspect { width: 126px; } .g-select { width: 120px; }
.g, .g1 { font: bold 20px "Noto Sans", sans-serif; fill: #178be6; stroke: none; text-anchor: middle; }
.g1 { font: bold 17px "Liberation Mono", monospace; }

.viewport { flex: 1; position: relative; background: #fff; border-bottom: 2px solid #bdbdbd; min-height: 0; }
.scene { position: absolute; inset: 0; width: 100%; height: 100%; }
.grid line { stroke: #ebebeb; vector-effect: non-scaling-stroke; }
.grid .major { stroke: #c8c8c8; } .grid .edge { stroke: #6c6c6c; } .grid .red { stroke: #ff8a8a; } .grid .green { stroke: #8dff8d; }
.shadow { fill: #777; opacity: .5; }
.solid { fill: #6b6a62; stroke: #6b6a62; stroke-width: 4; stroke-linejoin: round; }
.dark { fill: #4b4a45; stroke: #4b4a45; }
.solid .foot { stroke: #2f7088; stroke-width: 4; }
.top { fill: #5a7495; stroke: #386fbe; stroke-width: 4; stroke-linejoin: round; }
.hot { fill: none; stroke: #dbe8fb; stroke-width: 1; }
.ghost { fill: none; stroke: #5a9cc4; stroke-width: 1; opacity: .8; }
.slots { fill: #5a7495; stroke: #386fbe; stroke-width: 5; stroke-linejoin: round; }
.cuts { fill: #4d4c46; stroke: #26343e; stroke-width: 1; }
.holes ellipse { fill: url(#wall); stroke: #386fbe; stroke-width: 4; }
.holes path { fill: #e8f2f6; }
.ticks { stroke: #111; stroke-width: 1; }
.balls circle { fill: #b9c3d6; fill-opacity: .42; stroke: #44587c; stroke-opacity: .35; }
.rings circle { fill: #fff; stroke: #9c9c9c; stroke-width: 2; }
.axes path { stroke-width: 3; }
.axes text { font: 18px "Liberation Sans", sans-serif; }
.cube-text { font: bold 11px "Liberation Sans", sans-serif; fill: #999; }
.cube-x { font: 14px "Liberation Sans", sans-serif; fill: #ff8080; }
.cube-shade { fill: #999; }

.browser { position: absolute; left: 6px; top: 6px; width: 449px; }
.panel-head { height: 37px; display: flex; align-items: center; background: #f5f5f5; border: 1px solid #ddd; border-bottom-width: 2px; padding: 2px 18px 0 9px; font-size: 18px; }
.panel-head h2 { flex: 1; margin-left: 20px; }
.comments { position: absolute; left: 6px; bottom: 5px; width: 449px; font-size: 17px; }
.comments h2 { margin-left: 33px; }
.tree { padding-top: 8px; display: flex; flex-direction: column; gap: 6px; font-size: 18px; }
.tree li { display: flex; align-items: center; height: 30px; }
.l1 { padding-left: 27px; } .l2 { padding-left: 54px; } .l3 { padding-left: 81px; }
.chev { width: 12px; height: 12px; margin-right: 15px; fill: none; stroke: #444; stroke-width: 2; }
.node { display: flex; align-items: center; height: 30px; background: #f5f5f5; padding-right: 17px; }
.ic { width: 24px; height: 24px; margin: 0 8px 0 5px; }
.node span, .node label { margin-left: 13px; padding-bottom: 2px; }
.node label { font-weight: 600; font-size: 17px; }
.node input { appearance: none; width: 20px; height: 20px; margin: 0 -6px 0 23px; border: 2px solid #777; border-radius: 50%; background: radial-gradient(circle, #333 0 4px, #d5dae6 5px); }

.navbar { position: absolute; left: 50%; bottom: 8px; transform: translateX(-50%); height: 36px; display: flex; background: #f5f5f5; padding: 0 1px 0 3px; }
.navbar svg { width: 26px; height: 30px; }
.navbar button { gap: 5px; }
.w48 { width: 48px; } .w39 { width: 39px; } .w46 { width: 46px; } .w54 { width: 54px; }
.warn { position: absolute; right: 18px; bottom: 12px; }

.dialog { position: absolute; right: 59px; top: 194px; width: 375px; background: #f5f5f5; border: 2px solid #dedede; }
.dlg-head { height: 37px; display: flex; align-items: center; border-bottom: 2px solid #dedede; padding-left: 7px; gap: 20px; }
.dash { width: 12px; height: 3px; background: #8a8a8a; }
.dlg-tabs { display: flex; margin-top: 2px; height: 40px; border-bottom: 2px solid #c6c6c6; }
.dlg-tabs button { width: 44px; height: 40px; border-right: 1px solid #c6c6c6; }
.dlg-tabs .sel { background: #f5f5f5; border-top: 1px solid #c6c6c6; border-bottom: 2px solid #f5f5f5; }
.dlg-tabs .last { border-right: 0; }
.dlg-tabs svg { width: 24px; height: 24px; }
.dlg-body h3 { display: flex; align-items: center; gap: 10px; height: 48px; padding-left: 14px; font-weight: 600; }
.tri.big { border-width: 9px 6px 0; }
.tri.wide { border-width: 6px 5px 0; }
.pick { display: flex; align-items: center; height: 41px; padding-left: 17px; }
.pick span { width: 170px; font-size: 18px; }
.pick-btn { width: 94px; height: 41px; gap: 6px; background: #dcedf5; border: 2px solid #36a6da; }
.clear { margin-left: 18px; }
.listbox { position: relative; margin: 9px 45px 15px 12px; height: 208px; background: #fff; border: 2px solid #e9e9e9; }
.listbox li { display: flex; align-items: center; height: 39px; padding: 0 0 2px 16px; gap: 10px; font-size: 18px; }
.listbox svg { width: 24px; height: 24px; }
.scroll { position: absolute; right: 2px; top: 1px; width: 8px; height: 141px; border-radius: 4px; background: #e6e6e6; }
.list-tools { display: flex; padding: 9px 0 0 2px; }
.list-tools button { width: 39px; height: 36px; }
.listbox .del { width: 14px; height: 14px; }
.opt { display: flex; align-items: center; height: 60px; margin: 0 18px 0 1px; padding: 0 0 2px 15px; border-top: 2px solid #dedede; gap: 11px; font-weight: 600; font-size: 18px; }
.opt:last-child { height: 54px; padding: 2px 0 0 15px; }
.opt input { appearance: none; width: 18px; height: 18px; margin: 0; border: 2px solid #bcbcbc; background: #fff; }
.dialog footer { display: flex; align-items: center; height: 53px; border-top: 2px solid #dedede; padding: 0 18px 0 9px; gap: 20px; }
.dialog footer svg { margin-right: auto; }
.dialog footer button { height: 36px; border: 2px solid #bfbfbf; border-radius: 3px; padding: 0 18px; font-size: 18px; }
```
FILE: scene.js
```js
const NS = 'http://www.w3.org/2000/svg';
function add(parent, tag, attrs) {
  const el = document.createElementNS(NS, tag);
  for (const k in attrs) el.setAttribute(k, attrs[k]);
  parent.appendChild(el);
}

// Ground grid: u runs along the green axis, v along the red one.
const grid = document.querySelector('.grid');
const at = (u, v) => [906 + 47.4 * u + 38.3 * v, 556 - 14.3 * u + 17.85 * v];
const U = [-45, 22], V = [-18, 45];
function rule(a, b, cls) {
  add(grid, 'line', { x1: a[0], y1: a[1], x2: b[0], y2: b[1], class: cls });
}
const kind = (k, edge, axis) => k === 0 ? axis : k === edge ? 'edge' : k % 5 ? 'minor' : 'major';
for (let u = U[0]; u <= U[1]; u++) rule(at(u, V[0]), at(u, V[1]), kind(u, U[1], 'red'));
for (let v = V[0]; v <= V[1]; v++) rule(at(U[0], v), at(U[1], v), kind(v, V[0], 'green'));

// Lead-in points, one list for each region: origin, scale, points.
const regions = [
  [560, 470, 3, 3, [[1025,313],[1057,328],[1105,328],[1112,303],[1022,340],[1014,358],[1118,405],[1167,407],[1202,397],[1210,378],[1226,270],[142,580],[206,583],[255,585],[163,614],[268,661],[317,660],[351,652],[360,633]]],
  [1000, 470, 3, 3, [[545,117],[607,147],[1093,372],[1155,400],[1296,465],[1357,493],[618,600],[656,619],[357,640],[391,630],[440,632],[503,633],[541,655],[347,660],[452,710],[501,710],[537,700],[545,683],[1010,947],[1002,965],[1043,937],[1093,930],[1106,1013],[1155,1013],[1198,987],[1188,1003],[1254,982],[1220,1020],[1368,950],[194,1192],[155,1202],[152,1218],[246,1192],[347,1243],[256,1270],[305,1272],[336,1284]]],
  [400, 620, 2.24, 3, [[346,173],[383,173],[445,223],[333,242],[374,243],[415,247],[514,257],[133,262],[170,262],[233,310],[203,335],[120,333],[301,343],[372,408],[835,478],[871,478],[1002,560],[995,580],[622,563],[657,563],[789,645],[785,668],[1033,817],[1108,862],[1145,865],[1190,903],[1137,938],[1137,965],[1277,947],[1271,970],[1322,778],[1357,777],[1403,817],[1350,852],[1350,877],[1490,862],[1485,885],[975,443],[1000,440],[1038,440],[968,467],[1046,517],[1087,517],[1108,505],[1112,490]]]
];
const balls = document.querySelector('.balls');
for (const [x, y, sx, sy, pts] of regions)
  for (const [px, py] of pts) add(balls, 'circle', { cx: x + px / sx, cy: y + py / sy, r: 5 });
```
